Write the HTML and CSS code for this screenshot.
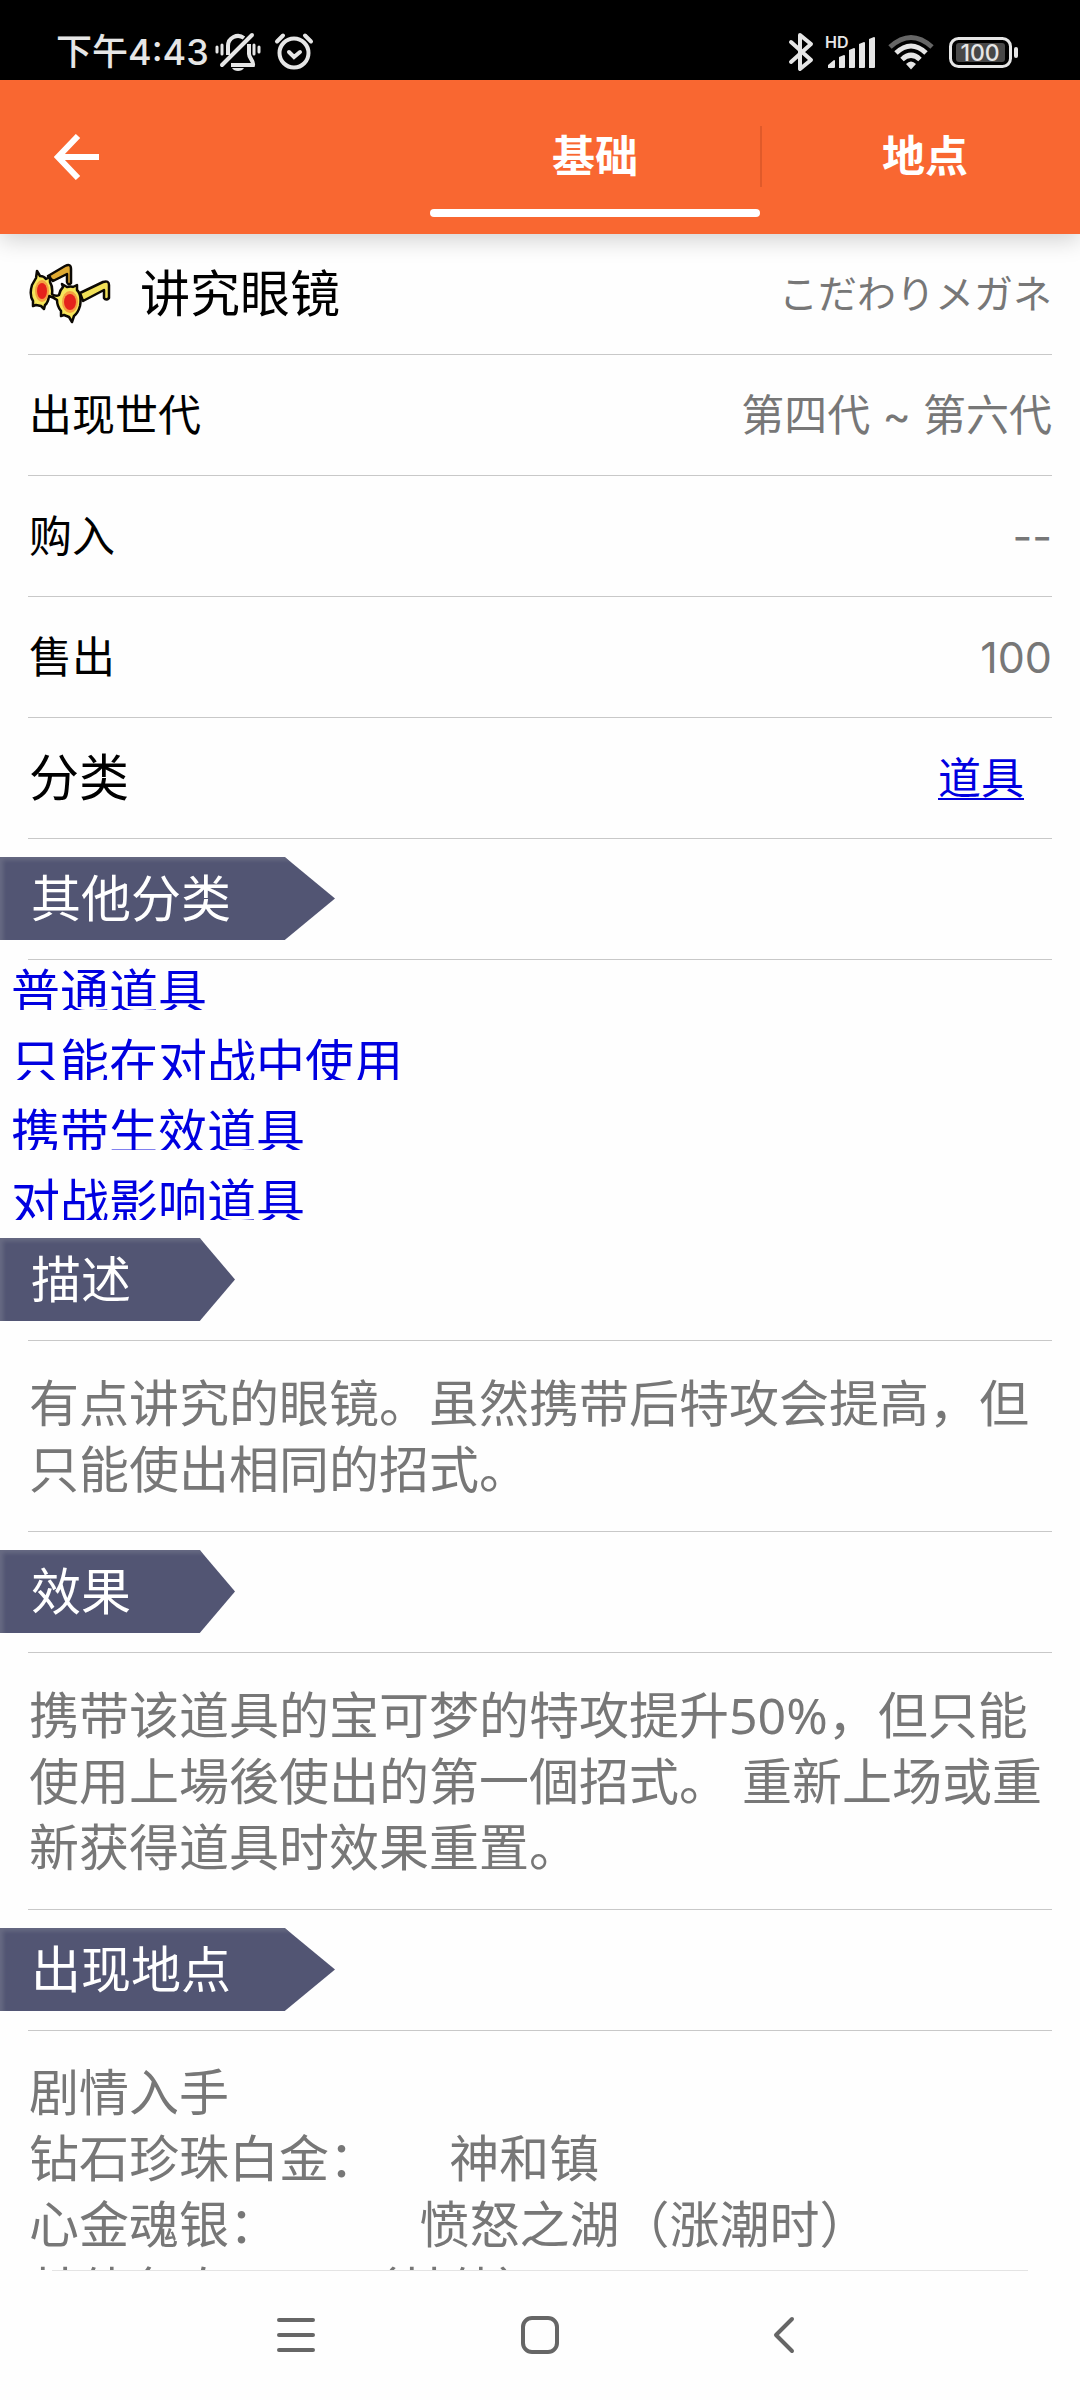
FILE: index.html
```html
<!DOCTYPE html>
<html lang="zh-CN">
<head>
<meta charset="utf-8">
<meta name="viewport" content="width=device-width, initial-scale=1">
<title>讲究眼镜</title>
<link rel="stylesheet" href="styles.css">
</head>
<body>
<div class="statusbar">
  <div class="status-group">
    <span class="clock">下午4:43</span>
    <svg class="icon-bell" width="46" height="40" viewBox="0 0 46 40" fill="none" stroke="#e6e6e6" stroke-width="4">
      <path d="M13 23V14a10 10 0 0 1 16-8M34 12v10c0 4 5 7 4 11H16" />
      <path d="M7 33 37 3" stroke-linecap="round"/>
      <path d="M2 15v5M7 13v9M39 13v9M44 15v5" stroke-width="3" stroke-linecap="round"/>
      <path d="M17 36h12c-2 4-10 4-12 0z" fill="#e6e6e6" stroke="none"/>
    </svg>
    <svg class="icon-alarm" width="40" height="40" viewBox="0 0 40 40" fill="none" stroke="#e6e6e6" stroke-width="4" stroke-linecap="round">
      <circle cx="20" cy="21" r="14.500"/>
      <path d="m15 20 5 5 6-5M3 9.500l6-6M37 9.500l-6-6"/>
    </svg>
  </div>
  <div class="status-group">
    <svg width="26" height="40" viewBox="0 0 26 40" fill="none" stroke="#e6e6e6" stroke-width="4" stroke-linecap="round" stroke-linejoin="round">
      <path d="M3 10 23 28 12 37V3l11 9L3 30"/>
    </svg>
    <svg class="icon-signal" width="52" height="40" viewBox="0 0 52 40" fill="#e6e6e6">
      <text class="hd" x="0" y="16">HD</text>
      <path d="M3 36v-3l6-5q1 0 1 1v6q0 1-1 1zM14 36V25l5-2q1 0 1 1v11q0 1-1 1zM24 36V18l5-2q1 0 1 1v18q0 1-1 1zM34 36V12l5-2q1 0 1 1v24q0 1-1 1zM44 36V7l5-2q1 0 1 1v29q0 1-1 1z"/>
    </svg>
    <svg class="icon-wifi" width="46" height="40" viewBox="0 0 46 40" fill="none" stroke="#e6e6e6" stroke-width="5">
      <path d="M2 15Q23-4 44 15" stroke="#666"/>
      <path d="M8 21Q23 7 38 21M14 27.500Q23 19 32 27.500"/>
      <path d="M23 37.500 18 32Q23 27 28 32z" fill="#e6e6e6" stroke="none"/>
    </svg>
    <svg class="icon-battery" width="70" height="40" viewBox="0 0 70 40" fill="#e6e6e6">
      <rect x="1.500" y="6.500" width="60" height="28" rx="8" fill="none" stroke="#e6e6e6" stroke-width="3"/>
      <rect x="7" y="11" width="49" height="19" rx="3" fill="#484848"/>
      <rect x="65" y="15" width="4" height="11" rx="2"/>
      <text class="charge" x="31" y="29" text-anchor="middle">100</text>
    </svg>
  </div>
</div>

<header class="appbar">
  <button class="back" type="button" aria-label="返回">
    <svg width="46" height="46" viewBox="0 0 46 46" fill="none" stroke="#fff" stroke-width="6">
      <path d="M24 2 4 23l20 21M4 23h41"/>
    </svg>
  </button>
  <nav class="tabs">
    <button class="tab tab-active" type="button">基础</button>
    <button class="tab tab-next" type="button">地点</button>
  </nav>
</header>

<main class="content">
  <div class="row">
    <h1 class="title">
      <svg width="82" height="64" viewBox="0 0 82 64" stroke="#0c0904" stroke-width="2.500" stroke-linejoin="round">
        <path d="M19 14 36 4q6-3 6 3v14q-3 3-4-1v-8L24 19z" fill="#e0aa32"/>
        <path d="M51 31 74 20q6-2 6 3v13q-3 3-5 0v-8L54 39z" fill="#f1e057"/>
        <path d="m8 9 3 5q4 0 6 3l4-2v5q3 5 2 12 4 3 7 1 1-5 4-8l-1-3 5 3q4-1 6 0l4-2v5q5 5 3 16-2 7-6 10l-2 6-3-5-5-2-3 1v-5q-4-5-4-11-4-3-8-4-1 7-4 9l-1 4-3-3-5-1-3 1v-5Q0 33 3 23L7 16z" fill="#f5e55b"/>
        <ellipse cx="13" cy="29" rx="7" ry="11" fill="#f5a040" stroke="none"/>
        <ellipse cx="13" cy="29" rx="5" ry="8" fill="#e5221c" stroke="none"/>
        <ellipse cx="41" cy="40" rx="8" ry="11" fill="#f5a040" stroke="none"/>
        <ellipse cx="41" cy="40" rx="6" ry="8" fill="#e5221c" stroke="none"/>
      </svg>
      讲究眼镜
    </h1>
    <span class="value value-small" lang="ja">こだわりメガネ</span>
  </div>
  <div class="row"><span class="label">出现世代</span><span class="value">第四代 ~ 第六代</span></div>
  <div class="row"><span class="label">购入</span><span class="value">--</span></div>
  <div class="row"><span class="label">售出</span><span class="value">100</span></div>
  <div class="row"><span class="label label-large">分类</span><a class="value value-link" href="#items">道具</a></div>

  <div class="section-head"><h2 class="ribbon">其他分类</h2></div>
  <ul class="categories">
    <li><a href="#normal">普通道具</a></li>
    <li><a href="#battle">只能在对战中使用</a></li>
    <li><a href="#held">携带生效道具</a></li>
    <li><a href="#effect">对战影响道具</a></li>
  </ul>

  <div class="section-head"><h2 class="ribbon">描述</h2></div>
  <p class="text">有点讲究的眼镜。虽然携带后特攻会提高，但只能使出相同的招式。</p>

  <div class="section-head"><h2 class="ribbon">效果</h2></div>
  <p class="text">携带该道具的宝可梦的特攻提升50%，但只能使用上場後使出的第一個招式。 重新上场或重新获得道具时效果重置。</p>

  <div class="section-head"><h2 class="ribbon">出现地点</h2></div>
  <p class="text places">剧情入手
钻石珍珠白金：     神和镇
心金魂银：          愤怒之湖（涨潮时）
其他各次2    4（其他）</p>
</main>

<footer class="navbar">
  <button type="button" aria-label="菜单">
    <svg width="44" height="44" viewBox="0 0 44 44" stroke="#666" stroke-width="4" stroke-linecap="round"><path d="M5 7h34M5 22h34M5 37h34"/></svg>
  </button>
  <button type="button" aria-label="主页">
    <svg width="44" height="44" viewBox="0 0 44 44" fill="none" stroke="#666" stroke-width="4"><rect x="5" y="5" width="34" height="34" rx="9"/></svg>
  </button>
  <button type="button" aria-label="返回">
    <svg width="44" height="44" viewBox="0 0 44 44" fill="none" stroke="#666" stroke-width="4" stroke-linejoin="round" stroke-linecap="round"><path d="M30 6 14 22l16 16"/></svg>
  </button>
</footer>
</body>
</html>
```
FILE: styles.css
```css
* {
  box-sizing: border-box;
}

body {
  margin: 0;
  height: 100vh;
  display: flex;
  flex-direction: column;
  overflow: hidden;
  background: #fefefe;
  color: #000;
  font-family: Inter, "Noto Sans CJK SC", sans-serif;
  font-size: 43px;
  line-height: 66px;
}

button {
  border: 0;
  padding: 0;
  background: none;
  color: inherit;
  font: inherit;
}

svg {
  display: block;
  flex: none;
}

h1,
h2,
p,
ul {
  margin: 0;
  padding: 0;
  font-weight: 400;
}

/* system status bar */
.statusbar {
  flex: none;
  height: 80px;
  padding: 24px 61px 0 56px;
  display: flex;
  justify-content: space-between;
  background: #000;
  color: #e6e6e6;
}

.status-group {
  display: flex;
  align-items: center;
  height: 56px;
}

.clock {
  font-size: 36px;
  font-weight: 500;
  line-height: 56px;
}

.icon-bell {
  margin-left: 6px;
}

.icon-alarm {
  margin-left: 13px;
}

.icon-signal {
  margin-left: 11px;
}

.icon-wifi {
  margin-left: 11px;
}

.icon-battery {
  margin-left: 15px;
}

.hd {
  font-size: 16px;
  font-weight: 600;
}

.charge {
  font-size: 23px;
  font-weight: 500;
}

/* app bar with tabs */
.appbar {
  position: relative;
  flex: none;
  height: 154px;
  display: flex;
  justify-content: space-between;
  background: #f96731;
  color: #fff;
  box-shadow: 0 6px 22px rgba(0, 0, 0, 0.18);
}

.back {
  padding: 0 54px;
}

.tabs {
  display: flex;
}

.tab {
  width: 330px;
  padding-bottom: 2px;
  font-weight: 700;
}

.tab-active {
  position: relative;
}

.tab-active::after {
  content: "";
  position: absolute;
  left: 0;
  right: 0;
  bottom: 17px;
  height: 8px;
  border-radius: 4px;
  background: #fff;
}

.tab-next {
  width: 320px;
  padding-left: 10px;
  background: linear-gradient(#e05a2a, #e05a2a) 0 46px / 2px 61px no-repeat;
}

/* detail rows */
.content {
  flex: 1;
  min-height: 0;
  overflow: hidden;
}

.row,
.section-head {
  height: 121px;
  display: flex;
  align-items: center;
  background: linear-gradient(#c8c8c8, #c8c8c8) 28px 100% / calc(100% - 56px) 1px no-repeat;
}

.row {
  justify-content: space-between;
  padding: 0 28px 2px 29px;
}

.title {
  display: flex;
  align-items: center;
  gap: 29px;
  font-size: 50px;
}

.label-large {
  font-size: 50px;
}

.value {
  color: #777;
}

.value-small {
  font-family: Inter, "Noto Sans CJK JP", sans-serif;
  font-size: 39px;
}

.value-link {
  margin-right: 28px;
  color: #0000e0;
  text-underline-offset: 4px;
  text-decoration-thickness: 2px;
}

.ribbon {
  height: 83px;
  margin-top: -2px;
  padding: 9px 104px 0 31px;
  background: #525573;
  box-shadow: inset 3px 3px 4px #686b83;
  clip-path: polygon(0 0, 85% 0, 100% 50%, 85% 100%, 0 100%);
  color: #fff;
  font-size: 50px;
}

/* each link shows only the top 50px of its line */
.categories {
  list-style: none;
  display: grid;
  gap: 20px;
  padding-left: 11px;
}

.categories li {
  height: 50px;
  overflow: hidden;
}

.categories a {
  display: block;
  color: #0000e0;
  font-size: 49px;
  line-height: 66px;
  text-decoration: none;
}

.text {
  padding: 29px 28px 30px 29px;
  background: linear-gradient(#c8c8c8, #c8c8c8) 28px 100% / calc(100% - 56px) 1px no-repeat;
  color: #777;
  font-family: "Noto Sans", "Noto Sans CJK SC", sans-serif;
  font-size: 50px;
}

.places {
  font-family: Inter, "Noto Sans CJK SC", sans-serif;
  white-space: pre;
}

/* system navigation */
.navbar {
  flex: none;
  height: 130px;
  display: flex;
  justify-content: center;
  background: linear-gradient(#e4e4e4, #e4e4e4) 50% 0 / calc(100% - 104px) 1px no-repeat #fefefe;
}

.navbar button {
  width: 244px;
  display: flex;
  justify-content: center;
  align-items: center;
}
```
